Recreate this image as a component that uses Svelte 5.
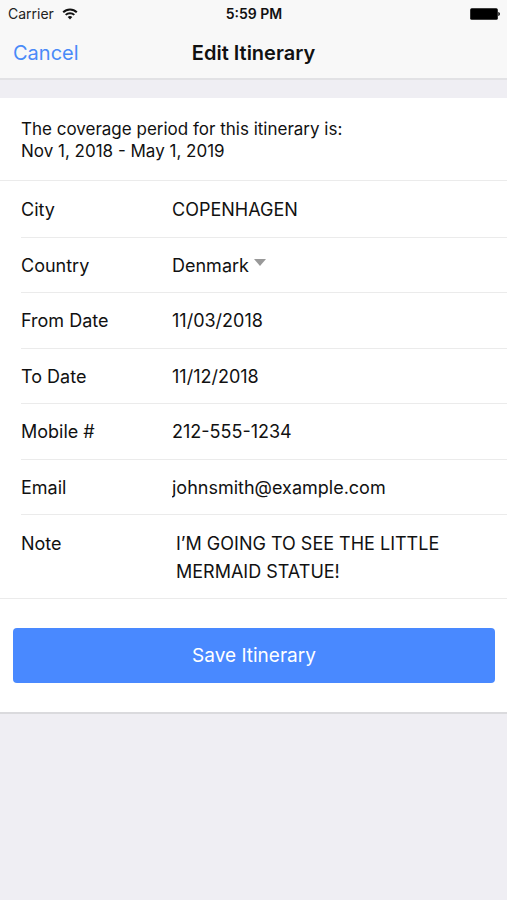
<script>
  let city = $state("COPENHAGEN");
  let country = $state("Denmark");
  let fromDate = $state("11/03/2018");
  let toDate = $state("11/12/2018");
  let mobile = $state("212-555-1234");
  let email = $state("johnsmith@example.com");
  let note = $state("I’M GOING TO SEE THE LITTLE MERMAID STATUE!");

  function save(e) {
    e.preventDefault();
  }
</script>

<header>
  <div class="status">
    <div class="carrier">
      <span>Carrier</span>
      <svg class="wifi" viewBox="0 0 16 12" aria-hidden="true">
        <path d="M1.2 4.3a9.6 9.6 0 0 1 13.6 0" />
        <path d="M3.7 6.9a6.1 6.1 0 0 1 8.6 0" />
        <path class="dot" d="M8 11.5 5.7 9.1a3.3 3.3 0 0 1 4.6 0z" />
      </svg>
    </div>
    <span class="time">5:59 PM</span>
    <svg class="battery" viewBox="0 0 30 12" aria-hidden="true">
      <rect x="0.2" y="0.2" width="27.6" height="11.6" rx="1.5" />
      <path d="M28.3 4.1c1 .2 1.6 1 1.6 1.9s-.6 1.7-1.6 1.9z" />
    </svg>
  </div>
  <nav>
    <button class="cancel" type="button">Cancel</button>
    <h1>Edit Itinerary</h1>
  </nav>
</header>

<main>
  <form onsubmit={save}>
    <p class="intro">
      The coverage period for this itinerary is:<br />
      Nov 1, 2018 - May 1, 2019
    </p>

    <div class="fields">
      <div class="row">
        <label for="city">City</label>
        <input id="city" type="text" bind:value={city} />
      </div>
      <div class="row">
        <label for="country">Country</label>
        <div class="picker">
          <select id="country" bind:value={country}>
            <option>Denmark</option>
          </select>
          <span class="caret"></span>
        </div>
      </div>
      <div class="row">
        <label for="from">From Date</label>
        <input id="from" type="text" bind:value={fromDate} />
      </div>
      <div class="row">
        <label for="to">To Date</label>
        <input id="to" type="text" bind:value={toDate} />
      </div>
      <div class="row">
        <label for="mobile">Mobile #</label>
        <input id="mobile" type="tel" bind:value={mobile} />
      </div>
      <div class="row">
        <label for="email">Email</label>
        <input id="email" type="email" bind:value={email} />
      </div>
      <div class="row note">
        <label for="note">Note</label>
        <textarea id="note" rows="2" bind:value={note}></textarea>
      </div>
    </div>

    <div class="actions">
      <button class="save" type="submit">Save Itinerary</button>
    </div>
  </form>
</main>

<style>
  :global(body) {
    background: #efeef3;
    color: #111;
    font-family: Inter, "Liberation Sans", sans-serif;
    font-size: 18px;
  }

  header {
    background: #f8f8f8;
    border-bottom: 2px solid #e2e2e5;
  }

  .status {
    display: grid;
    grid-template-columns: 1fr auto 1fr;
    align-items: center;
    height: 27px;
    padding: 0 7px 0 8px;
    font-size: 14px;
  }

  .carrier {
    display: flex;
    align-items: center;
    gap: 8px;
    color: #222;
  }

  .wifi {
    width: 16px;
    height: 12px;
    fill: none;
    stroke: #111;
    stroke-width: 2;
  }

  .wifi .dot {
    fill: #111;
    stroke: none;
  }

  .time {
    font-weight: 600;
  }

  .battery {
    justify-self: end;
    width: 30px;
    height: 12px;
  }

  nav {
    display: grid;
    grid-template-columns: 1fr auto 1fr;
    align-items: center;
    height: 51px;
    padding: 0 13px;
  }

  h1 {
    margin: 0;
    font-size: 20px;
    font-weight: 600;
  }

  button,
  input,
  select,
  textarea {
    margin: 0;
    padding: 0;
    border: 0;
    background: none;
    color: inherit;
    font: inherit;
  }

  button {
    cursor: pointer;
  }

  .cancel {
    justify-self: start;
    color: #498af8;
    font-size: 20px;
  }

  form {
    margin-top: 18px;
    background: #fff;
    border-bottom: 2px solid #dadadd;
  }

  .intro {
    margin: 0;
    padding: 20px 21px 18px;
    border-bottom: 1px solid #ebebeb;
    font-size: 17px;
    line-height: 22px;
  }

  .fields {
    padding-top: 1px;
    border-bottom: 1px solid #ebebeb;
  }

  .row {
    box-sizing: border-box;
    display: grid;
    grid-template-columns: 151px 1fr;
    align-items: center;
    min-height: 56px;
    margin-left: 21px;
    border-bottom: 1px solid #ebebeb;
  }

  .row:nth-child(even) {
    min-height: 55px;
  }

  .row.note {
    align-items: start;
    padding: 15px 0 12px;
    border-bottom: 0;
    line-height: 28px;
  }

  input {
    width: 100%;
    height: 28px;
  }

  .picker {
    display: flex;
    align-items: center;
    gap: 5px;
  }

  select {
    appearance: none;
    field-sizing: content;
  }

  .caret {
    margin-bottom: 6px;
    border: 6px solid transparent;
    border-top: 7px solid #999;
    border-bottom: 0;
    pointer-events: none;
  }

  textarea {
    display: block;
    box-sizing: border-box;
    width: 100%;
    padding: 0 50px 0 4px;
    line-height: 28px;
    resize: none;
    overflow: hidden;
  }

  .actions {
    padding: 29px 12px 29px 13px;
  }

  .save {
    width: 100%;
    height: 55px;
    border-radius: 4px;
    background: #4989ff;
    color: #fff;
    font-size: 19px;
  }
</style>
